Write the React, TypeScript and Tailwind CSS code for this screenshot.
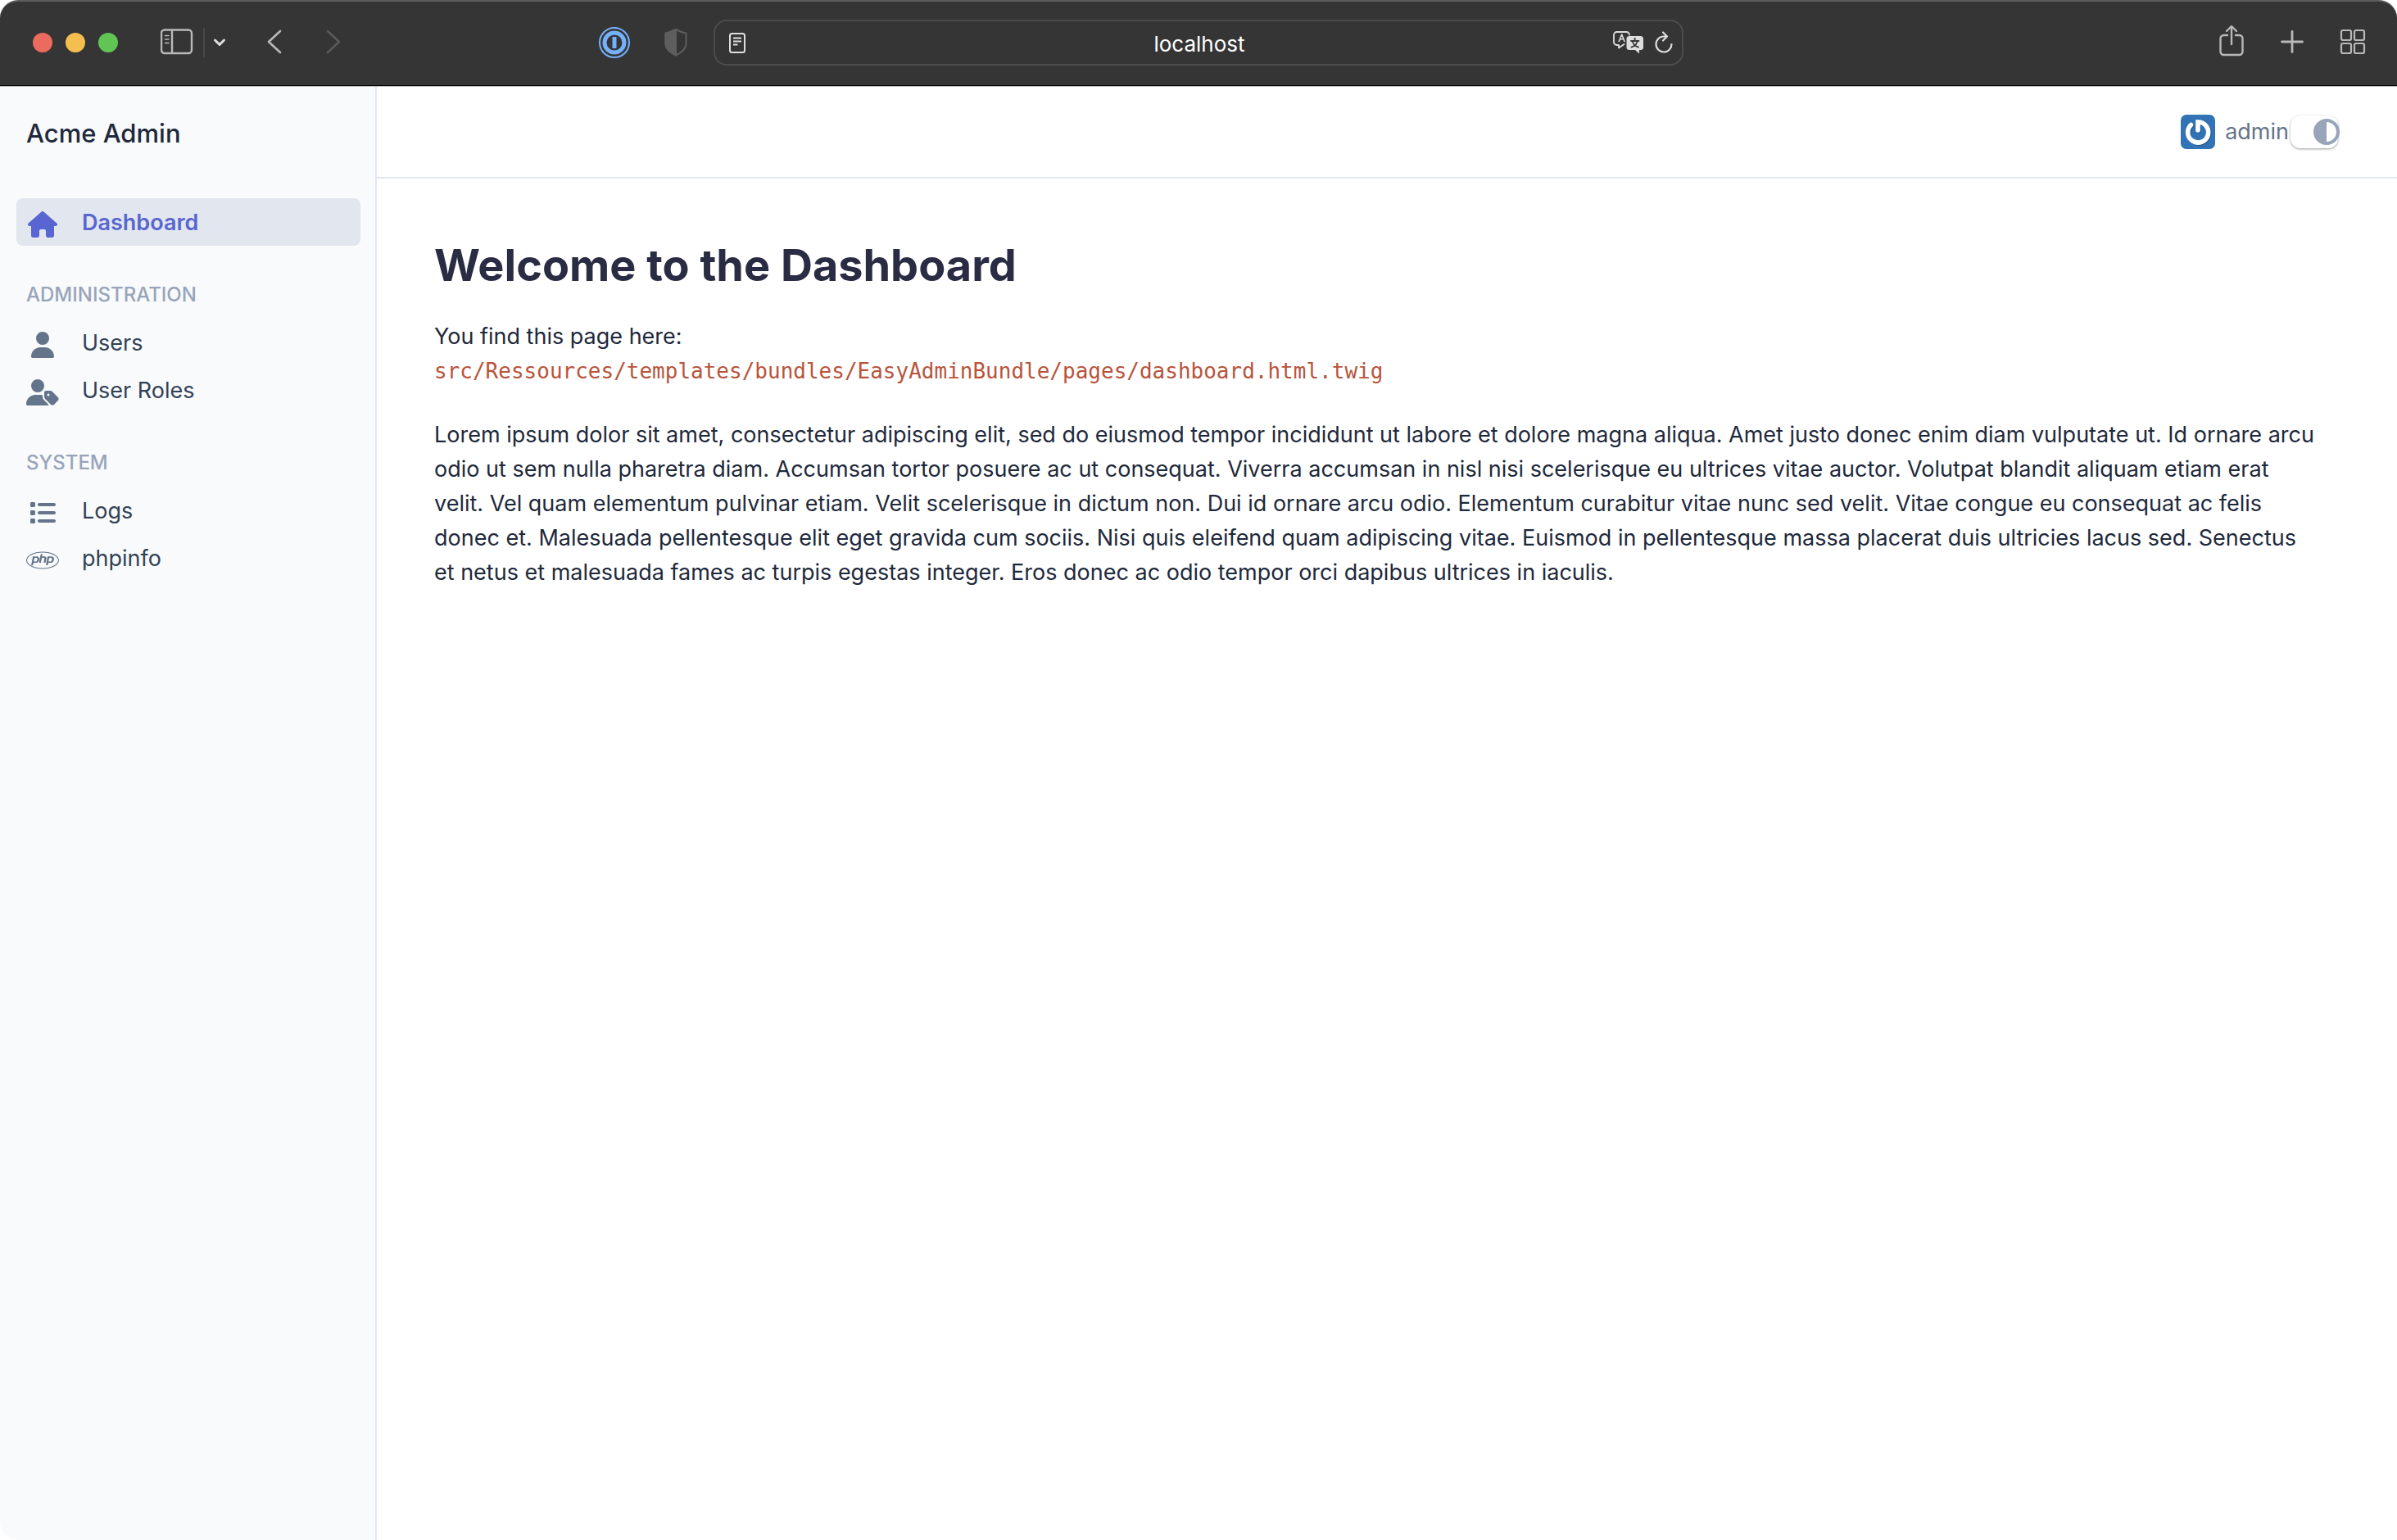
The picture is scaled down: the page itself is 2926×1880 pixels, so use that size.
import type { ReactNode } from "react";
import { FaHouse, FaUser, FaUserTag, FaList, FaPhp, FaCircleHalfStroke } from "react-icons/fa6";

function BrowserBar() {
  return (
    <header className="grid h-[105px] grid-cols-[1fr_1184px_1fr] items-center rounded-t-[22px] border-t-2 border-b border-t-[#5c5d5c] border-b-black bg-[#353535] pb-0.5 text-[#b9b9b9]">
      <div className="flex items-center pl-10">
        <div className="flex gap-4">
          <span className="size-6 rounded-full bg-[#ed6a5e]" />
          <span className="size-6 rounded-full bg-[#f4bf4f]" />
          <span className="size-6 rounded-full bg-[#61c554]" />
        </div>
        <button aria-label="Sidebar" className="ml-13 pb-0.5">
          <svg width="40" height="32" viewBox="0 0 40 32" fill="none" stroke="currentColor" strokeWidth="2">
            <rect x="1" y="1.500" width="37" height="28.500" rx="4" strokeWidth="2.4" />
            <path d="M14 1.500v28.500" strokeWidth="2.4" />
            <path d="M5.500 8.500h4.500M5.500 13h4.500M5.500 17.500h4.500" strokeWidth="1.600" strokeLinecap="round" />
          </svg>
        </button>
        <span className="ml-3 h-9 w-0.5 bg-[#484848]" />
        <button aria-label="Tab groups" className="ml-2.5">
          <svg width="16" height="12" viewBox="0 0 16 12" fill="none" stroke="#dedede" strokeWidth="3" strokeLinecap="round" strokeLinejoin="round">
            <path d="M2.500 3l5.500 5.500 5.500-5.500" />
          </svg>
        </button>
        <button aria-label="Back" className="ml-[50px] pb-0.5">
          <svg width="20" height="32" viewBox="0 0 20 32" fill="none" stroke="currentColor" strokeWidth="2.600" strokeLinecap="round" strokeLinejoin="round">
            <path d="M16 3L2 16l14 13" />
          </svg>
        </button>
        <button aria-label="Forward" className="ml-13 pb-0.5 text-[#5a5a5a]">
          <svg width="20" height="32" viewBox="0 0 20 32" fill="none" stroke="currentColor" strokeWidth="2.600" strokeLinecap="round" strokeLinejoin="round">
            <path d="M2 3l14 13L2 29" />
          </svg>
        </button>
        <div className="ml-auto flex items-center gap-10 pr-[31px]">
          <button aria-label="Password manager">
            <svg width="40" height="40" viewBox="0 0 40 40" fill="none" stroke="#75b1fb">
              <circle cx="20" cy="20" r="18" strokeWidth="2" />
              <circle cx="20" cy="20" r="12" strokeWidth="5" />
              <path d="M20 13v14" strokeWidth="5" />
            </svg>
          </button>
          <button aria-label="Privacy report" className="text-[#5e5e5e]">
            <svg width="30" height="36" viewBox="0 0 30 36" fill="none" stroke="currentColor" strokeWidth="2" strokeLinejoin="round">
              <path d="M15 2c4 2.200 8 3.700 12.500 4.500V20c0 6.500-6.500 10.500-12.500 13.500C9 30.500 2.500 26.500 2.500 20V6.500C7 5.700 11 4.200 15 2z" />
              <path d="M15 2v31.500C9 30.500 2.500 26.500 2.500 20V6.500C7 5.700 11 4.200 15 2z" fill="currentColor" />
            </svg>
          </button>
        </div>
      </div>

      <div className="flex h-14 items-center rounded-2xl border-2 border-[#4c4d4c] pr-2.5 pl-4 text-[#dedede]">
        <button aria-label="Reader">
          <svg width="22" height="28" viewBox="0 0 22 28" fill="none" stroke="currentColor">
            <rect x="2" y="3" width="18" height="23" rx="2.500" strokeWidth="2" />
            <path d="M6 8.500h10M6 12.500h10M6 16.500h5.500" strokeWidth="1.800" />
          </svg>
        </button>
        <input aria-label="Address" defaultValue="localhost" className="min-w-0 flex-1 bg-transparent pt-0.5 pl-12 text-center text-[26px] text-white outline-none" />
        <div className="flex items-center gap-3">
          <button aria-label="Translate">
            <svg width="38" height="28" viewBox="0 0 38 28" fill="none" stroke="currentColor" strokeWidth="1.800" strokeLinecap="round" strokeLinejoin="round">
              <path d="M13.500 16L7 20.500V17H4.500A3.500 3.500 0 011 13.500v-9A3.500 3.500 0 014.500 1h12A3.500 3.500 0 0120 4.500" />
              <path d="M7.300 12.500L10.700 4l3.300 8.500M8.500 9.800h4.400" strokeWidth="1.600" />
              <path d="M20 6h13.500A3.500 3.500 0 0137 9.500v10a3.500 3.500 0 01-3.500 3.500H32v4.500L27 23h-7a3.500 3.500 0 01-3.500-3.500v-10A3.500 3.500 0 0120 6z" fill="currentColor" stroke="none" />
              <path d="M26.700 8.800v2.200M22 12h9.500M23.800 12.500c1 3.500 4 6.200 7.200 7.200M29.700 12.500c-1 3.500-4 6.200-7.200 7.200" stroke="#353535" />
            </svg>
          </button>
          <button aria-label="Reload">
            <svg width="24" height="28" viewBox="0 0 24 28" fill="none" stroke="currentColor" strokeWidth="2.200" strokeLinecap="round" strokeLinejoin="round">
              <path d="M21.500 16A9.500 9.500 0 1112 6.500h3.500M11 1.500l5 5-5 5" />
            </svg>
          </button>
        </div>
      </div>

      <div className="flex items-center justify-end gap-[42px] pr-[38px] pb-0.5">
        <button aria-label="Share" className="pb-0.5">
          <svg width="32" height="40" viewBox="0 0 32 40" fill="none" stroke="currentColor" strokeWidth="2.400" strokeLinecap="round" strokeLinejoin="round">
            <path d="M11 13H6.500a4 4 0 00-4 4v16a4 4 0 004 4h19a4 4 0 004-4V17a4 4 0 00-4-4H21M16 24V2.500M10 8l6-6 6 6" />
          </svg>
        </button>
        <button aria-label="New tab">
          <svg width="32" height="32" viewBox="0 0 32 32" fill="none" stroke="currentColor" strokeWidth="2.800" strokeLinecap="round">
            <path d="M16 3.500v25M3.500 16h25" />
          </svg>
        </button>
        <button aria-label="Tab overview">
          <svg width="32" height="32" viewBox="0 0 32 32" fill="none" stroke="currentColor" strokeWidth="2.200">
            <rect x="2" y="2" width="12" height="12" rx="2" />
            <rect x="18" y="2" width="12" height="12" rx="2" />
            <rect x="2" y="18" width="12" height="12" rx="2" />
            <rect x="18" y="18" width="12" height="12" rx="2" />
          </svg>
        </button>
      </div>
    </header>
  );
}

function MenuItem({ icon, label, active = false }: { icon: ReactNode; label: string; active?: boolean }) {
  return (
    <a
      href="#"
      className={
        active
          ? "flex h-[58px] items-center rounded-lg bg-[#e2e7ef] px-3 pt-0.5 text-[27px] font-semibold text-[#5966d1]"
          : "flex h-[58px] items-center rounded-lg px-3 pt-0.5 text-[27px] text-[#334155]"
      }
    >
      <span className={active ? "mr-7 flex w-10 justify-center pt-1" : "mr-7 flex w-10 justify-center pt-1 text-[#64748b]"}>{icon}</span>
      {label}
    </a>
  );
}

function MenuHeading({ children }: { children: string }) {
  return <h2 className="mt-[42px] mb-[11px] px-3 text-2xl leading-9 font-medium text-[#98a4ba]">{children}</h2>;
}

function Sidebar() {
  return (
    <aside className="w-[460px] shrink-0 rounded-bl-[22px] border-r-2 border-[#e2e8f0] bg-[#f8fafc] pr-[18px] pl-5">
      <p className="mt-[34px] px-3 text-[31px] leading-[46px] font-medium text-[#1e293b]">Acme Admin</p>
      <nav className="mt-14">
        <MenuItem active icon={<FaHouse className="size-9" />} label="Dashboard" />
        <MenuHeading>ADMINISTRATION</MenuHeading>
        <MenuItem icon={<FaUser className="size-8" />} label="Users" />
        <MenuItem icon={<FaUserTag className="size-10" />} label="User Roles" />
        <MenuHeading>SYSTEM</MenuHeading>
        <MenuItem icon={<FaList className="size-8" />} label="Logs" />
        <MenuItem icon={<FaPhp className="size-10" />} label="phpinfo" />
      </nav>
    </aside>
  );
}

function UserBar() {
  return (
    <div className="flex h-28 items-center justify-end border-b-2 border-[#e2e8f0] pr-[70px] text-[27px] text-[#64748b]">
      <button className="flex items-center gap-3">
        <svg width="42" height="42" viewBox="0 0 42 42" fill="none" strokeLinecap="round">
          <rect width="42" height="42" rx="7" fill="#3173b4" />
          <path d="M13.500 13.500A12.500 12.500 0 1022 10v10" stroke="#255a90" strokeWidth="5.600" />
          <path d="M12.500 12.500A12.500 12.500 0 1021 9v10" stroke="#fff" strokeWidth="5.600" />
        </svg>
        admin
      </button>
      <button aria-label="Appearance" className="mr-0.5 ml-0.5 flex h-10 w-[58px] items-center justify-end rounded-xl bg-white text-[#98a4ba] shadow-[0_1px_3px_rgba(0,0,0,0.4)]">
        <FaCircleHalfStroke className="-mr-0.5 size-8 shrink-0" />
      </button>
    </div>
  );
}

export default function App() {
  return (
    <div className="flex min-h-screen flex-col bg-white font-['Inter',sans-serif]">
      <BrowserBar />
      <div className="flex flex-1 border-t border-[#bfbfbf]">
        <Sidebar />
        <div className="min-w-0 flex-1">
          <UserBar />
          <main className="px-[70px] pt-[70px]">
            <h1 className="text-[54px] leading-[72px] font-bold text-[#292c42]">Welcome to the Dashboard</h1>
            <p className="mt-[30px] text-[27px] leading-[42px] text-[#1e293b]">
              You find this page here:
              <br />
              <code className="font-['DejaVu_Sans_Mono',monospace] text-[26px] text-[#b9543b]">
                src/Ressources/templates/bundles/EasyAdminBundle/pages/dashboard.html.twig
              </code>
            </p>
            <p className="mt-9 text-[27px] leading-[42px] text-[#1e293b]">
              Lorem ipsum dolor sit amet, consectetur adipiscing elit, sed do eiusmod tempor incididunt ut labore et dolore magna aliqua. Amet justo donec enim diam vulputate ut. Id ornare arcu
              <br />
              odio ut sem nulla pharetra diam. Accumsan tortor posuere ac ut consequat. Viverra accumsan in nisl nisi scelerisque eu ultrices vitae auctor. Volutpat blandit aliquam etiam erat
              <br />
              velit. Vel quam elementum pulvinar etiam. Velit scelerisque in dictum non. Dui id ornare arcu odio. Elementum curabitur vitae nunc sed velit. Vitae congue eu consequat ac felis
              <br />
              donec et. Malesuada pellentesque elit eget gravida cum sociis. Nisi quis eleifend quam adipiscing vitae. Euismod in pellentesque massa placerat duis ultricies lacus sed. Senectus
              <br />
              et netus et malesuada fames ac turpis egestas integer. Eros donec ac odio tempor orci dapibus ultrices in iaculis.
            </p>
          </main>
        </div>
      </div>
    </div>
  );
}
